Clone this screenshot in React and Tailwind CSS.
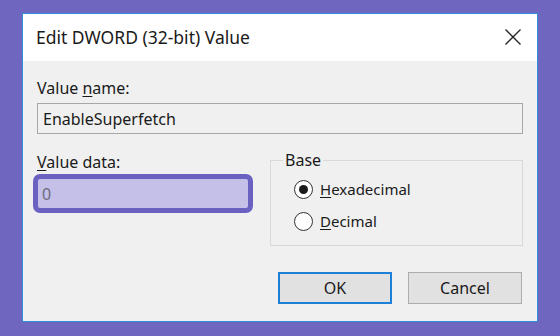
export default function App() {
  const font = { fontFamily: '"Noto Sans", "Open Sans", sans-serif' };
  return (
    <div className="w-[560px] h-[336px] bg-[#6f66c0] pt-[13px] pl-[22px]" style={font}>
      <div className="w-[516px] h-[309px] border border-[#2f8ee0] bg-[#f0f0f0] flex flex-col text-[#1a1a1a]">
        {/* title bar */}
        <div className="h-[47px] bg-white flex items-center justify-between pl-[13px] pr-[15px] shrink-0">
          <span className="text-[17.5px]">Edit DWORD (32-bit) Value</span>
          <svg width="18" height="18" viewBox="0 0 18 18" className="mt-[-1px]">
            <path d="M1.5 1.5 L16.5 16.5 M16.5 1.5 L1.5 16.5" stroke="#222" strokeWidth="1.3" fill="none" />
          </svg>
        </div>

        <div className="flex-1 px-[14px] flex flex-col">
          <div className="mt-[18px] text-[16px] leading-[18px]">
            Value <u className="underline-offset-2">n</u>ame:
          </div>
          <div className="mt-[6px] h-[31px] border border-[#a7a7a7] bg-[#f0f0f0] flex items-center pl-[5px] text-[16px]">
            EnableSuperfetch
          </div>

          <div className="flex items-start mt-[17px]">
            <div className="w-[216px] flex flex-col">
              <div className="mt-[2px] text-[16px] leading-[18px]">
                <u className="underline-offset-2">V</u>alue data:
              </div>
              <div className="mt-[3px] -ml-[4px] w-[220px] h-[39px] rounded-[7px] border-[5px] border-[#6a61c1] bg-[#c4c0e8] flex items-center pl-[4px] text-[16px] text-[#6c6a80]">
                0
              </div>
            </div>

            <fieldset className="ml-[17px] w-[253px] h-[95px] border border-[#d9d9d9] pl-[23px] pb-[6px]">
              <legend className="ml-[-11px] px-[2px] text-[16px] leading-[18px]">Base</legend>
              <div className="flex items-center gap-[7px] mt-[9px] h-[22px]">
                <span className="w-[19px] h-[19px] rounded-full border border-[#333] bg-white flex items-center justify-center">
                  <span className="w-[9px] h-[9px] rounded-full bg-[#1a1a1a]" />
                </span>
                <span className="text-[15px]">
                  <u className="underline-offset-2">H</u>exadecimal
                </span>
              </div>
              <div className="flex items-center gap-[7px] mt-[10px] h-[22px]">
                <span className="w-[19px] h-[19px] rounded-full border border-[#333] bg-white" />
                <span className="text-[15px]">
                  <u className="underline-offset-2">D</u>ecimal
                </span>
              </div>
            </fieldset>
          </div>

          <div className="flex justify-end gap-[16px] mt-[26px] pr-[1px]">
            <button className="w-[114px] h-[32px] border-2 border-[#1e7fd8] bg-[#e1e1e1] text-[16px]">OK</button>
            <button className="w-[114px] h-[32px] border border-[#adadad] bg-[#e1e1e1] text-[16px]">Cancel</button>
          </div>
        </div>
      </div>
    </div>
  );
}
